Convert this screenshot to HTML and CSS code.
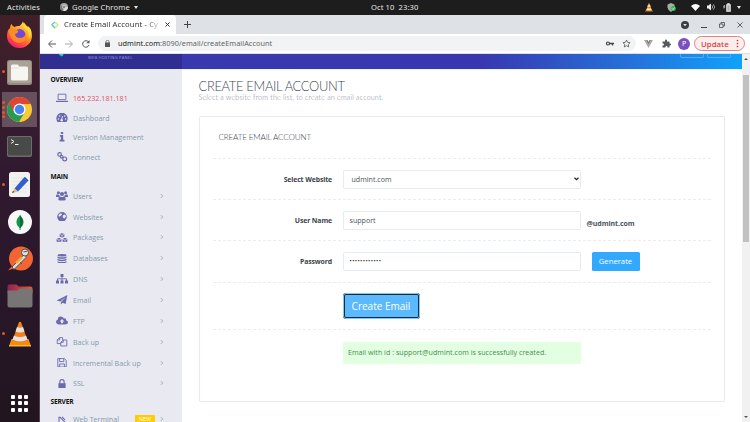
FILE: index.html
```
<!DOCTYPE html>
<html lang="en">
<head>
<meta charset="utf-8">
<title>Create Email Account</title>
<link rel="stylesheet" href="styles.css">
</head>
<body>
<header class="topbar">
  <span class="activities">Activities</span>
  <svg class="app-icon" viewBox="0 0 16 16"><circle cx="8" cy="8" r="8" fill="#aaa"/><path d="M8 8 1.2 4A8 8 0 0 0 6 15.7z" fill="#777"/><path d="M8 8h8a8 8 0 0 1-9 8z" fill="#ddd"/><circle cx="8" cy="8" r="3.5" fill="#888" stroke="#eee"/></svg>
  <span class="app-name">Google Chrome</span><i class="caret"></i>
  <span class="clock">Oct 10&nbsp; 23:30</span>
  <div class="tray">
    <svg width="8" height="9" viewBox="0 0 24 26"><path d="M4 18h16l4 7H0z" fill="#e87813"/><path d="M10 1h4l6 20q-8 4-16 0z" fill="#f58a1c"/><path d="m8.600 6-1.500 5h9.800l-1.500-5zM5.500 16l-1 4q7.500 3 15 0l-1-4z" fill="#eee"/></svg>
    <svg width="9" height="9" viewBox="0 0 18 18"><path d="M8 0l7 3v6q-1 6-7 9-6-3-7-9V3z" fill="#aaa"/><circle cx="12.500" cy="11" r="5" fill="#2dbd58"/><path d="m10 11 2 2 3-4" stroke="#fff" stroke-width="1.500" fill="none"/></svg>
    <svg class="wifi" width="9" height="7" viewBox="0 0 18 14"><path d="M0 4Q9-4 18 4L9 14z" fill="#fff"/></svg>
    <svg width="9" height="8" viewBox="0 0 18 16"><path d="M0 5h3l5-4v14l-5-4H0z" fill="#eee"/><path d="M10 5q3 3 0 6M12.500 2.500q6 5.500 0 11" stroke="#ccc" stroke-width="1.500" fill="none"/></svg>
    <svg width="8" height="9" viewBox="0 0 16 18"><path d="M2 4 0 9h2l-1 4 4-6H3l1-3z" fill="#bbb"/><path d="M7 3h2V1h4v2h2v14H7z" fill="#ddd" stroke="#fff"/><path d="M9 5h4v10H9z" fill="#aaa"/></svg>
    <i class="caret"></i>
  </div>
</header>
<div class="desktop">
  <nav class="dock">
    <div class="app"><svg width="27" height="27" viewBox="0 0 54 54"><defs><linearGradient id="fx" x1=".8" y1="0" x2=".2" y2="1"><stop offset="0" stop-color="#fff14a"/><stop offset=".45" stop-color="#ff9320"/><stop offset=".8" stop-color="#ff3750"/><stop offset="1" stop-color="#e31587"/></linearGradient></defs><path d="M8 14q0-5 3-8 2 5 6 6 5-3 10-2 4-2 7-9 2 8 8 11l2-2q8 8 8 20A25 24 0 0 1 2 30Q2 19 8 14z" fill="url(#fx)"/><circle cx="27" cy="28" r="12" fill="#714ad1"/><path d="M5 18q7-5 14-1l6 3q-1 5-7 6 1 9 12 8 9-2 9-11 5 19-12 21Q10 44 5 18z" fill="#ff8b25"/><path d="M36 3q-3 7 5 14 7 8 4 19 9-11 3-22l-5-2z" fill="#ffda3a"/></svg></div>
    <div class="app run"><svg width="25" height="25" viewBox="0 0 50 50"><rect width="50" height="50" rx="5" fill="#938b7d"/><rect x="2" y="2" width="46" height="44" rx="4" fill="#aaa294"/><path d="M8 12q0-3 3-3h10l4 4h14q3 0 3 3v22q0 3-3 3H11q-3 0-3-3z" fill="#f7f5f2"/><path d="M8 16h14l3-3" stroke="#ccc7bf" fill="none"/></svg></div>
    <div class="app active run4"><svg width="25" height="25" viewBox="0 0 50 50"><circle cx="25" cy="25" r="25" fill="#fbc934"/><path d="M3.500 12.500A25 25 0 0 0 24 50l11-19z" fill="#269b52"/><path d="M25 14h22.500A25 25 0 0 0 3.500 12.500l12 19z" fill="#df4436"/><circle cx="25" cy="25" r="12" fill="#fff"/><circle cx="25" cy="25" r="9.500" fill="#4385f5"/></svg></div>
    <div class="app"><svg width="25" height="21" viewBox="0 0 50 42"><rect width="50" height="42" rx="4" fill="#6c6d6b"/><rect x="2" y="2" width="46" height="37" rx="3" fill="#484a48"/><path d="m8 7 6 4-6 4M16 17h7" stroke="#eee" stroke-width="2" fill="none"/></svg></div>
    <div class="app run"><svg width="21" height="25" viewBox="0 0 42 50"><rect width="42" height="50" rx="5" fill="#f1f1ef"/><path d="M6 12h30M6 19h30M6 26h30M6 33h30M6 40h30" stroke="#ddd"/><path d="m11 33 18-21 8 7-19 20z" fill="#315fd0"/><path d="m29 12 3-2 7 7-2 2z" fill="#1946a5"/><path d="m11 33-5 9 12-3z" fill="#e5b886"/><path d="m8 38-2 4 5-2z" fill="#333"/></svg></div>
    <div class="app"><svg width="24" height="24" viewBox="0 0 48 48"><circle cx="24" cy="24" r="24" fill="#f8f8f8"/><path d="M24 10q14 15 1 26v4h-2v-4Q10 25 24 10z" fill="#15954b"/><path d="M24 10v27q12-12 0-27z" fill="#116a38"/></svg></div>
    <div class="app"><svg width="26" height="26" viewBox="0 0 52 52"><circle cx="28" cy="25" r="24" fill="#f26532"/><path d="m2 49 7-8 4 4z" fill="#f26532"/><path d="m10 42 24-25 5 5-25 25z" fill="#ddd" stroke="#575046" stroke-width="2"/><path d="m16 33 12-12 4 3-11 11z" fill="#f5a641"/><circle cx="36" cy="13" r="7" fill="#ddd" stroke="#575046" stroke-width="2"/><path d="m33 12 8-2M26 32l4 4" stroke="#555" stroke-width="2"/></svg></div>
    <div class="app"><svg width="26" height="24" viewBox="0 0 52 48"><defs><linearGradient id="fd"><stop stop-color="#8a2357"/><stop offset="1" stop-color="#ed572d"/></linearGradient></defs><path d="M1 5q0-4 4-4h14l4 4h24q4 0 4 4v10H1z" fill="url(#fd)"/><path d="M1 13h20l4-4h23q3 0 3 3v31q0 4-4 4H5q-4 0-4-4z" fill="#777675"/></svg></div>
    <div class="app run"><svg width="24" height="26" viewBox="0 0 48 52"><path d="M7 36h34l5 14H2z" fill="#f78b12"/><path d="M2 48h44v3H2z" fill="#ffb52e"/><path d="M22 2h4l13 37q-15 9-30 0z" fill="#f68018"/><path d="m18 12-3 9q9 4 18 0l-3-9q-6 3-12 0zM12 29l-3 8q15 8 30 0l-3-8q-12 6-24 0z" fill="#e3e3e3"/></svg></div>
    <div class="show-apps"><i></i><i></i><i></i><i></i><i></i><i></i><i></i><i></i><i></i></div>
  </nav>
  <main class="browser">
    <div class="tabs">
      <div class="tab">
        <svg width="8" height="8" viewBox="0 0 16 16" fill="none" stroke-width="3"><path d="m1 8 7-6" stroke="#58c8e9"/><path d="m8 2 6 6" stroke="#c9e78d"/><path d="m14 8-6 6" stroke="#f2df83"/><path d="m8 14-6-6" stroke="#49d7ba"/></svg>
        <span class="tab-title">Create Email Account - Cy</span>
        <svg class="close" width="5" height="5" viewBox="0 0 10 10"><path d="m1 1 8 8M9 1 1 9" stroke="#333" stroke-width="2"/></svg>
      </div>
      <svg class="plus" width="7" height="7" viewBox="0 0 14 14"><path d="M7 0v14M0 7h14" stroke="#444" stroke-width="2"/></svg>
      <div class="winctl">
        <svg width="8" height="8" viewBox="0 0 16 16"><circle cx="8" cy="8" r="8" fill="#3c4043"/><path d="M4.500 6h7L8 10.500z" fill="#eee"/></svg>
        <svg width="6" height="6" viewBox="0 0 12 12"><path d="M0 11h12" stroke="#444" stroke-width="2"/></svg>
        <svg width="6" height="6" viewBox="0 0 12 12"><path d="M1 4h7v7H1zM4 4V1h7v7H8" fill="none" stroke="#444" stroke-width="1.500"/></svg>
        <svg width="6" height="6" viewBox="0 0 12 12"><path d="m1 1 10 10M11 1 1 11" stroke="#444" stroke-width="1.600"/></svg>
      </div>
    </div>
    <div class="toolbar">
      <svg width="8" height="8" viewBox="0 0 16 16"><path d="M16 8H2M8 1 1 8l7 7" fill="none" stroke="#555" stroke-width="2"/></svg>
      <svg width="8" height="8" viewBox="0 0 16 16"><path d="M0 8h14M8 1l7 7-7 7" fill="none" stroke="#aaa" stroke-width="2"/></svg>
      <svg width="8" height="8" viewBox="0 0 16 16"><path d="M13 4A6.500 6.500 0 1 0 14 10" fill="none" stroke="#555" stroke-width="2"/><path d="M15 0v6.500H8.500z" fill="#555"/></svg>
      <div class="omnibox">
        <svg width="5" height="7" viewBox="0 0 10 14"><path d="M0 5h10v9H0z" fill="#555"/><path d="M2 6V3.500a3 3 0 0 1 6 0V6" fill="none" stroke="#555" stroke-width="1.500"/></svg>
        <span class="url"><b>udmint.com</b>:8090/email/createEmailAccount</span>
        <svg class="key" width="8" height="5" viewBox="0 0 16 10"><circle cx="4" cy="5" r="3" fill="none" stroke="#444" stroke-width="2.400"/><path d="M7 5h9M13 5v4" stroke="#444" stroke-width="2.600"/></svg>
        <svg width="9" height="9" viewBox="0 0 18 18"><path d="m9 2 2.200 4.700 5 .6-3.700 3.500 1 5.100L9 13.400l-4.500 2.500 1-5.100L1.800 7.300l5-.6z" fill="none" stroke="#555" stroke-width="1.600"/></svg>
      </div>
      <svg class="vue" width="9" height="8" viewBox="0 0 18 16"><path d="M0 0h4l5 9 5-9h4L9 16z" fill="#aaa"/><path d="M4 0h3l2 4 2-4h3L9 9z" fill="#777"/></svg>
      <svg class="puzzle" width="9" height="9" viewBox="0 0 18 18"><path d="M1 5h5V3a2 2 0 0 1 4 0v2h5v4h1a2 2 0 0 1 0 4h-1v4h-4v-1a2 2 0 0 0-4 0v1H1v-4h1a2 2 0 0 0 0-4H1z" fill="#555b60"/></svg>
      <span class="avatar">P</span>
      <span class="update">Update<svg width="3" height="9" viewBox="0 0 6 18" fill="#d93025"><circle cx="3" cy="3" r="1.700"/><circle cx="3" cy="9" r="1.700"/><circle cx="3" cy="15" r="1.700"/></svg></span>
    </div>
    <div class="viewport">
      <div class="page">
        <div class="site-header">
          <div class="brand"><svg width="10" height="5" viewBox="0 0 20 10"><path d="M3 0 9 5l4-3-1-2z" fill="#16dfc5"/></svg><span>WEB HOSTING PANEL</span></div>
          <div class="header-actions"><i></i><i></i></div>
        </div>
        <div class="body">
          <aside class="sidebar">
            <h4>OVERVIEW</h4>
            <ul class="overview">
              <li class="ip"><svg viewBox="0 0 20 16"><path d="M3.500 2h13v9h-13z" fill="none" stroke="#6c6aad" stroke-width="1.500"/><path d="M0 13h20v2H0z"/></svg><span>165.232.181.181</span></li>
              <li><svg viewBox="0 0 20 16"><path d="M2.500 15A9.500 9.500 0 1 1 17.500 15z"/><path d="m9 12 2-7" stroke="#e9eaf1" stroke-width="1.500"/><g fill="#e9eaf1"><circle cx="4" cy="10" r="1.300"/><circle cx="6" cy="5" r="1.300"/><circle cx="14.500" cy="5" r="1.300"/><circle cx="16" cy="10" r="1.300"/><circle cx="9.500" cy="12" r="2"/></g></svg><span>Dashboard</span></li>
              <li><svg viewBox="0 0 20 16"><path d="M8 0h4v3.500H8zM6.500 5H12v8h2v3H6v-3h2V8H6.500z"/></svg><span>Version Management</span></li>
              <li><svg viewBox="0 0 20 16"><g fill="none" stroke="#6c6aad" stroke-width="2"><circle cx="6" cy="4" r="3"/><circle cx="14.500" cy="11.500" r="3.200"/><circle cx="9.500" cy="8" r="2.200"/></g></svg><span>Connect</span></li>
            </ul>
            <h4>MAIN</h4>
            <ul class="menu">
              <li><svg viewBox="0 0 20 16"><circle cx="4" cy="3" r="2.500"/><circle cx="16" cy="3" r="2.500"/><circle cx="10" cy="5" r="3.500"/><path d="M0 10V8q0-3 3-2l3 1-1 3zM20 10V8q0-3-3-2l-3 1 1 3zM4 15v-2q0-5 3-4 3 2 6 0 3-1 3 4v2q-1 1-6 1t-6-1z"/></svg><span>Users</span></li>
              <li><svg viewBox="0 0 20 16"><circle cx="10" cy="8" r="8"/><path d="m6 3 3-1 1 2-3 3-2 1-1-2zM12 5l3-1 2 3-3 4-2-1-1-3z" fill="#e9eaf1"/></svg><span>Websites</span></li>
              <li><svg viewBox="0 0 20 16"><path d="m10 0 4 2v4l-4 2-4-2V2zM5 8l4 2v4l-4 2-4-2v-4zM15 8l4 2v4l-4 2-4-2v-4z"/><path d="m6 2 4 2 4-2M10 4v4M1 10l4 2 4-2M5 12v4M11 10l4 2 4-2M15 12v4" stroke="#e9eaf1" fill="none"/></svg><span>Packages</span></li>
              <li><svg viewBox="0 0 20 16"><ellipse cx="10" cy="2" rx="7.500" ry="2"/><path d="M2.500 4q7.500 3 15 0v2.500q-7.500 3-15 0zM2.500 8q7.500 3 15 0v2.500q-7.500 3-15 0zM2.500 12q7.500 3 15 0v2q-7.500 3.500-15 0z"/></svg><span>Databases</span></li>
              <li><svg viewBox="0 0 20 16"><path d="M7.500 0h5v5h-5zM0 11h5v5H0zM7.500 11h5v5h-5zM15 11h5v5h-5z"/><path d="M10 4v8M2.500 12V8h15v4" fill="none" stroke="#6c6aad" stroke-width="1.500"/></svg><span>DNS</span></li>
              <li><svg viewBox="0 0 20 16"><path d="m19 0-3 15-5-2-3 3v-4l9-9-10 8-6-2z"/></svg><span>Email</span></li>
              <li><svg viewBox="0 0 20 16"><path d="M4 14q-4-1-4-4 0-3 3-4 0-5 5-5 4 0 5 3 4-1 4 3 3 1 3 4 0 3-4 3z"/><path d="M10 5 6 9h2.500v3h3V9H14z" fill="#e9eaf1"/></svg><span>FTP</span></li>
              <li><svg viewBox="0 0 20 16"><path d="M8 11H2V5l4-4h5v4M6 1v4H2M8 9l4-4h6v10H8zM12 5v4H8" fill="none" stroke="#6c6aad" stroke-width="1.500"/></svg><span>Back up</span></li>
              <li><svg viewBox="0 0 20 16"><path d="M3 1h11l3 3v11H3zM6 1v5h7V1M6 15v-5h8v5" fill="none" stroke="#6c6aad" stroke-width="1.500"/></svg><span>Incremental Back up</span></li>
              <li><svg viewBox="0 0 20 16"><path d="M4 7h12v9H4z"/><path d="M6.500 8V4.500a3.500 3.500 0 0 1 7 0V8" fill="none" stroke="#6c6aad" stroke-width="2"/></svg><span>SSL</span></li>
            </ul>
            <h4>SERVER</h4>
            <ul class="menu server">
              <li><svg viewBox="0 0 20 16"><path d="M5 3v11h11M6 3l9 9M10 3l5 5" fill="none" stroke="#6c6aad" stroke-width="1.800"/></svg><span>Web Terminal</span><em>NEW</em></li>
            </ul>
          </aside>
          <section class="content">
            <h1>CREATE EMAIL ACCOUNT</h1>
            <p class="lead">Select a website from the list, to create an email account.</p>
            <div class="panel">
              <h2>CREATE EMAIL ACCOUNT</h2>
              <div class="row"><label>Select Website</label><div class="field select"><span>udmint.com</span><svg width="5" height="4" viewBox="0 0 10 8"><path d="m1 1.500 4 4 4-4" fill="none" stroke="#222" stroke-width="2.400"/></svg></div></div>
              <div class="row"><label>User Name</label><div class="field">support</div><span class="domain">@udmint.com</span></div>
              <div class="row"><label>Password</label><div class="field dots">••••••••••••</div><button class="generate">Generate</button></div>
              <div class="row submit"><label></label><button class="create">Create Email</button></div>
              <div class="row result"><label></label><div class="alert">Email with id : support@udmint.com is successfully created.</div></div>
            </div>
          </section>
        </div>
      </div>
      <div class="scrollbar"><i class="up"></i><i class="thumb"></i><i class="down"></i></div>
    </div>
  </main>
</div>
</body>
</html>
```

FILE: styles.css
```
* { box-sizing: border-box; }
html, body { margin: 0; height: 422px; overflow: hidden; }
body { font-family: "Open Sans", "Noto Sans", sans-serif; font-size: 7px; color: #4b535c; background: #fff; white-space: nowrap; }
svg { display: block; flex: none; }
h1, h2, h4, p, ul { margin: 0; padding: 0; }
ul { list-style: none; }
button { font-family: inherit; padding: 0; border: 0; color: #fff; white-space: nowrap; }

.topbar { position: relative; display: flex; align-items: center; height: 15px; padding-bottom: 1px; background: #1d1d1d; color: #e6e6e6; font-family: "Noto Sans", sans-serif; font-size: 7.600px; letter-spacing: .14px; }
.activities { width: 54px; padding-left: 7px; }
.app-icon { width: 8px; height: 8px; margin: 0 4px 0 6px; }
.caret { border: 2.500px solid transparent; border-top: 3.500px solid #e8e8e8; border-bottom: 0; margin-left: 4px; }
.clock { position: absolute; left: 371px; letter-spacing: .08px; }
.tray { display: flex; align-items: center; margin-left: auto; width: 105px; gap: 7px; }
.tray svg:nth-child(1) { margin-right: 7px; }
.tray .wifi { margin-left: 8px; }
.tray .caret { margin-left: -1px; }

.desktop { display: flex; height: 407px; }
.dock { width: 40px; flex: none; background: linear-gradient(#42202a, #321a30 35%, #29172a 65%, #21151f); border-right: 1px solid #56404f; display: flex; flex-direction: column; padding-top: 1px; }
.app { position: relative; height: 37.400px; flex: none; display: flex; align-items: center; justify-content: center; }
.app.active { background: linear-gradient(#66505e, #66505e) center / 35px 35px no-repeat; }
.run::before, .run4::before { content: ""; position: absolute; left: 2px; top: 17px; width: 3px; height: 3px; border-radius: 50%; background: #e95420; }
.run4::before { top: 10px; box-shadow: 0 5px #e95420, 0 10px #e95420, 0 14px #e95420; }
.show-apps { display: grid; grid-template-columns: repeat(3, 4px); gap: 2.500px; justify-content: center; margin-top: 42px; }
.show-apps i { height: 4px; border-radius: 1px; background: #fff; }

.browser { flex: 1; min-width: 0; }
.tabs { height: 19px; display: flex; align-items: center; background: #dee1e6; font-family: "Noto Sans", sans-serif; }
.tab { display: flex; align-items: center; width: 132px; height: 19px; margin-left: 4px; padding-left: 7px; background: #fff; border-radius: 4px 4px 0 0; font-size: 7.700px; color: #333; letter-spacing: .09px; }
.tab-title { width: 98px; margin: -1px 0 0 5px; overflow: hidden; -webkit-mask-image: linear-gradient(90deg, #000 83%, transparent); mask-image: linear-gradient(90deg, #000 83%, transparent); }
.close { margin-left: 2.500px; }
.plus { margin-left: 8px; }
.winctl { margin-left: auto; display: flex; align-items: center; gap: 12px; padding-right: 7px; }
.toolbar { height: 20px; display: flex; align-items: center; padding: 0 4px 0 8px; background: #fff; border-bottom: 1px solid #dedfe8; font-family: "Noto Sans", sans-serif; }
.toolbar > svg + svg { margin-left: 9px; }
.omnibox { display: flex; align-items: center; width: 538px; height: 15px; margin-left: 8px; padding: 0 5px 0 7px; border-radius: 8px; background: #f1f3f4; font-size: 7.300px; color: #666; }
.url { margin: -1px auto 0 8px; letter-spacing: .05px; }
.url b { font-weight: 400; color: #222; }
.key { margin-right: 8px; }
.toolbar > .vue { margin-left: 8px; }
.toolbar > .puzzle { margin-left: 9px; }
.avatar { width: 12px; height: 12px; margin: 0 4px 0 7px; border-radius: 50%; background: #7b50bd; color: #fff; font-size: 7px; line-height: 12px; text-align: center; }
.update { display: flex; align-items: center; width: 51px; height: 15px; flex: none; padding-left: 6px; border: 1px solid #dc8581; border-radius: 8px; background: #fdeeee; color: #d03a34; font-size: 7.900px; font-weight: 500; }
.update svg { margin: 0 5px 0 auto; }

.viewport { display: flex; height: 368px; overflow: hidden; }
.page { width: 702px; }
.site-header { display: flex; justify-content: space-between; height: 15px; background: linear-gradient(90deg, #302f91 142px, #3a38ad 142px, #3937b0 440px, #2475dc 600px, #0fa3fb 100%); }
.brand { display: flex; padding-left: 17px; }
.brand span { margin-left: 21px; font-size: 4px; line-height: 7px; letter-spacing: .25px; color: #9b99d2; }
.header-actions { display: flex; gap: 3px; margin-right: 11px; }
.header-actions i { width: 24px; height: 4px; border: 1px solid #5fa8ef; border-top: 0; border-radius: 0 0 2px 2px; }
.body { display: flex; height: 353px; }
.sidebar { width: 142px; flex: none; padding: 3.500px 0 0; background: #e9eaf1; overflow: hidden; }
.sidebar h4 { height: 13px; padding-left: 10.500px; font-size: 6.600px; line-height: 13px; color: #111; letter-spacing: -.2px; }
.sidebar li { display: flex; align-items: center; height: 20.850px; padding-left: 16px; color: #8599aa; font-size: 7.100px; }
.sidebar li svg { width: 12px; height: 9.600px; margin-right: 5px; fill: #6c6aad; }
.overview { height: 84.700px; padding-top: 2.500px; }
.overview li { height: 19.700px; }
.sidebar .ip { color: #e0505c; font-weight: 500; letter-spacing: .03px; }
.menu { height: 211.700px; padding-top: 2.200px; }
.menu li::after { content: ""; width: 3px; height: 3px; margin: 0 19px 0 auto; border: solid #a9b6c4; border-width: .7px .7px 0 0; transform: rotate(45deg) scale(.8); }
.sidebar .server { height: 24px; padding-top: 1.500px; }
.server li { height: 20px; }
.server em { margin-left: 16px; width: 20px; height: 8px; background: #fc0; color: #fff; font: 5.500px/8px "Open Sans", sans-serif; text-align: center; border-radius: 1px; }

.content { flex: 1; padding: 8px 17px 0 16.500px; border-top: 1px solid #f2f3f8; }
h1 { font: 300 12.900px/16px Lato, sans-serif; color: #414b58; letter-spacing: -.31px; }
.lead { font: 300 7.100px/8px Lato, sans-serif; color: #7f8996; letter-spacing: .19px; }
.panel { height: 286px; margin-top: 14px; padding: 0 13px; border: 1px solid #e5ebf2; border-radius: 2px; }
h2 { height: 41px; padding-left: 6px; font: 300 8.100px/40px Lato, sans-serif; color: #38414d; letter-spacing: -.16px; }
.row { display: flex; align-items: center; height: 41.200px; border-top: 1px dashed #e9edf1; }
.row label { width: 119.500px; margin: 0 10.500px 0 0; text-align: right; font-size: 6.900px; font-weight: 700; color: #3b434c; letter-spacing: -.12px; }
.field { display: flex; align-items: center; width: 238px; height: 19px; padding: 0 6px; border: 1px solid #e4ebf2; border-radius: 1.500px; font-size: 7.100px; color: #4b535c; }
.select { justify-content: space-between; padding: 0 1px 0 8px; }
.dots { font-size: 6px; color: #222; letter-spacing: .4px; }
.domain { margin: 6px 0 0 6px; font-weight: 700; letter-spacing: -.06px; }
.generate { width: 48px; height: 19px; margin-left: 11px; border-radius: 1.500px; background: #32a9ff; font-size: 7.700px; }
.submit { height: 47.500px; }
.create { width: 77px; height: 26px; border: 2px solid #1d2b39; border-radius: 3px; outline: 1px solid #7cc8ff; outline-offset: -1px; background: #5bb9ff; font-size: 10px; }
.alert { width: 238px; height: 22px; padding-left: 5.500px; border-radius: 1px; background: #e2ffe2; color: #4d8a50; font-size: 7.150px; line-height: 21px; }
.result { height: 46px; }

.scrollbar { width: 8px; flex: none; display: flex; flex-direction: column; align-items: center; background: #f1f1f1; }
.up, .down { border: 2px solid transparent; border-bottom: 2px solid #555; border-top: 0; margin-top: 4px; }
.thumb { width: 6px; height: 167px; margin-top: 15px; background: #c1c1c1; }
.down { margin: auto 0 4px; border-top: 2px solid #555; border-bottom: 0; }
```
